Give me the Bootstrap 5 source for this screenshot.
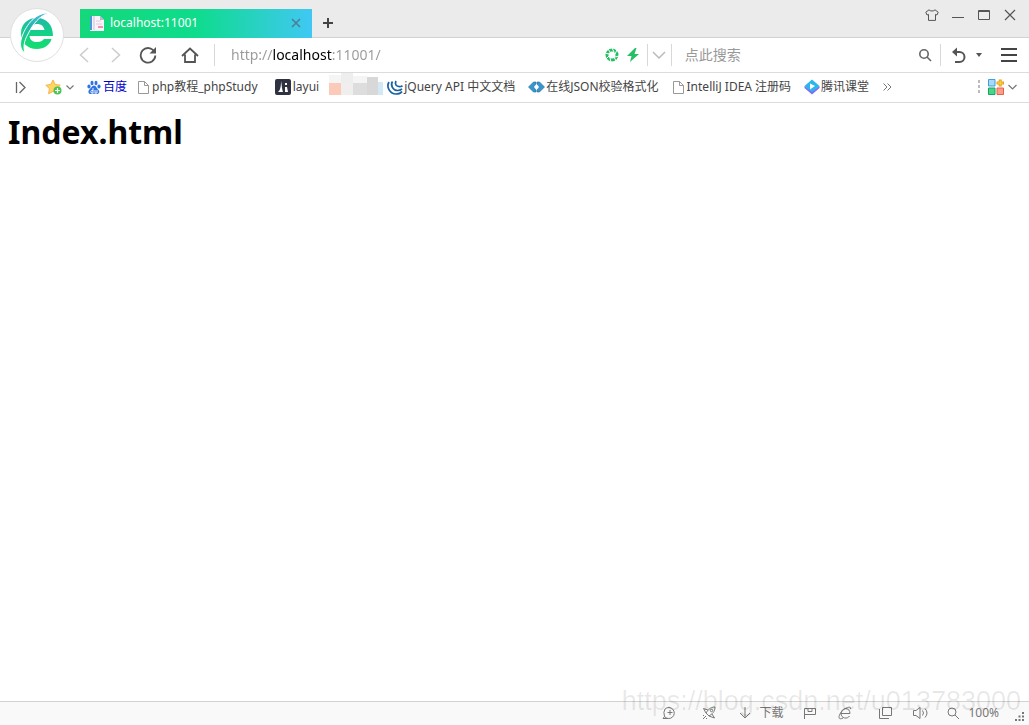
<!DOCTYPE html>
<html lang="zh-CN">
<head>
<meta charset="utf-8">
<meta name="viewport" content="width=device-width, initial-scale=1">
<title>localhost:11001</title>
<link href="https://cdn.jsdelivr.net/npm/bootstrap@5.3.0/dist/css/bootstrap.min.css" rel="stylesheet">
<style>
body{font-family:"Noto Sans","Noto Sans CJK SC",sans-serif;font-size:12px;line-height:16px;color:#444;background:#fff}
svg{display:block;flex:none}
button{border:0;background:none;padding:0;color:#555;display:flex;align-items:center;justify-content:center;flex:none}
.titlebar{height:38px;background:#ebebeb;border-bottom:1px solid #d2d2d2;padding-left:80px;padding-right:11px}
.logo-disc{left:10px;top:7px;width:54px;height:56px;z-index:3}
.tab-active{width:232px;height:29px;margin-top:9px;padding:0 10px 2px 8px;color:#fff;background:linear-gradient(90deg,#14d87a,#0edc8c 50%,#40c8f4)}
.tab-plus{width:32px;height:29px;margin-top:9px;padding-bottom:2px}
.win-tools{height:30px;gap:10px}
.win-tools button{width:16px;height:16px}
.toolbar{height:35px;border-bottom:1px solid #dcdcdc;padding-left:68px;padding-right:12px}
.w32{width:32px}.w52{width:52px}.w20{width:20px}.w23{width:23px}
.rule{width:1px;height:22px;background:#d8d8d8;flex:none}
.rule-home{margin-left:-2px}
.field{border:0;outline:0;background:none;padding:0;min-width:0;font-size:14px;line-height:20px}
.field::placeholder{color:#999;opacity:1}
.address{flex:375 1 0;margin-left:16px;color:transparent;background:linear-gradient(90deg,#999 42px,#000 42px,#000 101px,#999 101px);-webkit-background-clip:text;background-clip:text}
.search{flex:234 1 0;margin-left:13px}
.bookmarks{height:30px;border-bottom:1px solid #dcdcdc;padding:0 12px 1px 12px}
.bookmarks a{color:#444;text-decoration:none;display:flex;align-items:center;gap:1px;white-space:nowrap;margin-right:10px}
.bookmarks a.spaced{margin-right:13px}
.bookmarks .visited-link{color:#00c}
.mosaic{margin-right:4px;margin-bottom:6px}
.page-title{font-size:32px;line-height:42px;font-weight:700;color:#000;margin:0}
.viewport-area{padding:8px}
.statusbar{height:24px;background:#f9f9f9;border-top:1px solid #d2d2d2;padding:0 5px 2px 0}
.statusbar button{color:#777}
.st{width:36px}
.watermark{right:8px;bottom:8px;font-family:"Liberation Sans",sans-serif;font-size:27px;line-height:32px;color:rgba(0,0,0,.09);pointer-events:none}
</style>
</head>
<body class="d-flex flex-column vh-100 overflow-hidden position-relative">
<header>
  <div class="titlebar d-flex align-items-start">
    <div class="logo-disc position-absolute">
      <svg width="54" height="56" viewBox="0 0 54 56">
        <defs><linearGradient id="eg" x1="0" y1="0" x2="0" y2="1"><stop offset="0" stop-color="#22b8a8"/><stop offset=".5" stop-color="#12d286"/><stop offset="1" stop-color="#16dc70"/></linearGradient>
        <linearGradient id="sw" x1="0" y1="1" x2="1" y2="0"><stop offset="0" stop-color="#16dc70"/><stop offset=".5" stop-color="#20b8b0"/><stop offset="1" stop-color="#62b8e8"/></linearGradient></defs>
        <circle cx="27" cy="28" r="26.500" fill="#fff" stroke="#e0e0e0"/>
        <path fill-rule="evenodd" d="M43 29H19.500C20 33 22.500 35 27 35c3.500 0 5.500-1 7-3h7.500C40 38 34 42 27 42c-9.500 0-16-6-16-15.500S17.500 11 27 11s16 6.500 16 18zM19.500 23h15c-.8-4-3.500-6-7.500-6s-6.700 2-7.500 6z" fill="url(#eg)"/>
        <path d="M39 6C28 5 18 15 13 27 9 36 10 43 15 46c-2-6-1-12 3-19C23 17 29 9 39 6z" fill="url(#sw)" stroke="#fff" stroke-width="1"/>
      </svg>
    </div>
    <div class="tab-active d-flex align-items-center">
      <svg width="18" height="18" viewBox="0 0 18 18"><path d="M2 2h10l4 4v11H2z" fill="#f7f4fb"/><path d="M2 2h2v14H2z" fill="#4b98dc"/><path d="M6 2v14" stroke="#c9bfd8"/><path d="M12 2v4h4z" fill="#b9b5cc"/><path d="M8 7h5M8 10h6" stroke="#edc6d4"/><path d="M10 13h5" stroke="#ef92ac" stroke-width="2"/></svg>
      <span class="ms-1 flex-grow-1 ps-0">localhost:11001</span>
      <button type="button" aria-label="关闭标签"><svg width="12" height="12" viewBox="0 0 12 12" stroke="#4d7f94" stroke-width="1.600"><path d="M2 2l8 8M10 2l-8 8"/></svg></button>
    </div>
    <button class="tab-plus" type="button" aria-label="新标签"><svg width="12" height="12" viewBox="0 0 12 12" stroke="#444" stroke-width="2"><path d="M6 1v10M1 6h10"/></svg></button>
    <div class="win-tools d-flex align-items-center ms-auto">
      <button type="button" aria-label="皮肤"><svg width="14" height="12" viewBox="0 0 14 12" fill="none" stroke="#555"><path d="M4 .8L.8 3.200 2 6l1.500-.6v6h7v-6L12 6l1.200-2.800L10 .8C9 2.400 5 2.400 4 .8z"/></svg></button>
      <button type="button" aria-label="最小化"><svg width="12" height="12" viewBox="0 0 12 12" stroke="#555"><path d="M0 8.500h12"/></svg></button>
      <button type="button" aria-label="最大化"><svg width="12" height="10" viewBox="0 0 12 10" fill="none" stroke="#555"><path d="M.5 .5h11v9H.5zM0 1.500h12"/></svg></button>
      <button type="button" aria-label="关闭"><svg width="12" height="12" viewBox="0 0 12 12" stroke="#555" stroke-width="1.200"><path d="M1 1l10 10M11 1L1 11"/></svg></button>
    </div>
  </div>
  <nav class="toolbar d-flex align-items-center">
    <button class="w32" type="button" aria-label="后退"><svg width="10" height="16" viewBox="0 0 10 16" fill="none" stroke="#ccc" stroke-width="1.500"><path d="M9 1L1.500 8 9 15"/></svg></button>
    <button class="w32" type="button" aria-label="前进"><svg width="10" height="16" viewBox="0 0 10 16" fill="none" stroke="#ccc" stroke-width="1.500"><path d="M1 1l7.500 7L1 15"/></svg></button>
    <button class="w32" type="button" aria-label="刷新"><svg width="18" height="18" viewBox="0 0 18 18" fill="none" stroke="#555" stroke-width="1.800"><path d="M15.500 6A7.300 7.300 0 1 0 16.300 9.500"/><path d="M17 1v6.500h-6.500z" fill="#555" stroke="none"/></svg></button>
    <button class="w52" type="button" aria-label="主页"><svg width="18" height="16" viewBox="0 0 18 16" fill="none" stroke="#555" stroke-width="1.800"><path d="M1 9l8-7.500L17 9M4 7.500V15h10V7.500"/></svg></button>
    <span class="rule rule-home"></span>
    <input class="field address" type="text" value="http://localhost:11001/" aria-label="地址">
    <button type="button" aria-label="极速模式"><svg width="14" height="14" viewBox="0 0 14 14" fill="none"><circle cx="7" cy="7" r="5" stroke="#20bf64" stroke-width="3"/><path d="M7 0l2 4M12 2l-2 4M14 8l-4 1M11 13l-2-4M6 14l-1-4M1 11l3-3M0 5l4 1M3 1l2 3" stroke="#fff"/></svg></button>
    <button class="ms-2" type="button" aria-label="加速"><svg width="12" height="14" viewBox="0 0 12 14" fill="#26bf66"><path d="M8 0L0 8h4.500L3 14l9-8H7.500L9.500 0z"/></svg></button>
    <span class="rule ms-2"></span>
    <button class="w23" type="button" aria-label="展开地址"><svg width="14" height="8" viewBox="0 0 14 8" fill="none" stroke="#bbb" stroke-width="1.500"><path d="M1 1l6 6 6-6"/></svg></button>
    <span class="rule"></span>
    <input class="field search" type="search" placeholder="点此搜索" aria-label="搜索">
    <button type="button" aria-label="搜索"><svg width="14" height="14" viewBox="0 0 14 14" fill="none" stroke="#666" stroke-width="1.600"><circle cx="6" cy="6" r="4.200"/><path d="M9 9l4 4"/></svg></button>
    <span class="rule ms-2 me-2"></span>
    <button class="w20" type="button" aria-label="恢复"><svg width="16" height="17" viewBox="0 0 16 17"><path d="M3 5h5.500a5 5 0 0 1 0 10H4" fill="none" stroke="#555" stroke-width="2"/><path d="M1 5l5-4.500v9z" fill="#555"/></svg></button>
    <button class="w20" type="button" aria-label="恢复列表"><svg width="6" height="4" viewBox="0 0 6 4"><path d="M0 0h6L3 4z" fill="#555"/></svg></button>
    <button class="ms-2 ps-1" type="button" aria-label="菜单"><svg width="16" height="14" viewBox="0 0 16 14" stroke="#444" stroke-width="2"><path d="M0 1h16M0 7h16M0 13h16"/></svg></button>
  </nav>
  <nav class="bookmarks d-flex align-items-center">
    <button type="button" aria-label="侧栏" class="me-3"><svg width="16" height="14" viewBox="0 0 16 14" fill="none" stroke="#666" stroke-width="1.300"><path d="M4.500 2v11M7.500 2L13 7.500 7.500 13"/></svg></button>
    <button type="button" aria-label="收藏" class="me-1"><svg width="18" height="16" viewBox="0 0 18 16"><path d="M9 1l2.200 4.500 5 .7-3.600 3.500.8 5L9 12.400l-4.400 2.300.8-5L1.900 6.200l4.900-.7z" fill="#ffd75e" stroke="#f6b24e"/><circle cx="13.500" cy="11.500" r="4" fill="#4cc552"/><path d="M13.500 9v5M11 11.500h5" stroke="#fff" stroke-width="1.200"/></svg></button>
    <button type="button" aria-label="收藏列表" class="me-2 pe-1"><svg width="8" height="5" viewBox="0 0 8 5" fill="none" stroke="#777" stroke-width="1.200"><path d="M.5 .5L4 4 7.500 .5"/></svg></button>
    <a href="#" class="visited-link"><svg width="16" height="16" viewBox="0 0 16 16" fill="#2f74e0"><ellipse cx="3" cy="7.500" rx="1.600" ry="2"/><ellipse cx="6" cy="4" rx="1.500" ry="2.200"/><ellipse cx="10" cy="4" rx="1.500" ry="2.200"/><ellipse cx="13" cy="7.500" rx="1.600" ry="2"/><path d="M8 6.500c2 0 3 3 4.500 4.500 2 2 0 4-1.500 4-1.500 0-4.500-.5-6 0-2 .4-3.500-2-2-4C4 10 6 6.500 8 6.500z"/><path d="M7 9v5H5.500q-1.500-1.200 0-2.500H7M9 11v3h2v-3" fill="none" stroke="#fff" stroke-width=".9"/></svg>百度</a>
    <a href="#" class="spaced"><svg width="14" height="14" viewBox="0 0 14 14" fill="#fff" stroke="#999"><path d="M1.500 1.500h6l4 4v8h-10zM7.500 1.500v4h4"/></svg>php教程_phpStudy</a>
    <a href="#"><svg class="ms-1" width="16" height="16" viewBox="0 0 16 16"><rect width="16" height="16" rx="2" fill="#2f3241"/><path d="M6 2c1 4 .5 6 2 11H3c2-1.500 3-5 3-11z" fill="#fff"/><path d="M10 4h2v2h-2zM10 8h2l1 5h-3z" fill="#fff"/></svg>&#8202;layui</a>
    <svg class="mosaic" width="54" height="23" viewBox="0 0 54 23"><path d="M0 2h12v8H0zM24 3h14v9H24z" fill="#f5f5f5"/><path d="M12 0h12v10H12z" fill="#eee"/><path d="M0 10h12v12H0z" fill="#fbcab8"/><path d="M12 10h12v12H12z" fill="#f1eeee"/><path d="M24 10h14v12H24z" fill="#ddd"/><path d="M38 4h11v18H38z" fill="#d8d8d9"/><path d="M49 9h5v13h-5z" fill="#d3e8f5"/></svg>
    <a href="#" class="spaced"><svg width="16" height="16" viewBox="0 0 16 16" fill="none" stroke="#1c62a0" stroke-width="1.700"><path d="M2 3C-1 8 3 15 9 15c3 0 5-1 6-2.500"/><path d="M5.500 2.500C3 6 6 11.500 10.500 11.500c2 0 3.500-.7 4.500-1.700"/><path d="M9 2c-1.500 3 0 5.500 3.500 5.700 1 0 2-.3 3-1"/></svg>jQuery API 中文文档</a>
    <a href="#" class="spaced"><svg width="17" height="12" viewBox="0 0 17 12"><path d="M5.500 1L.5 6l5 5h2.500V9L5.500 6 8 3V1zM11.500 1l5 5-5 5H9V9l2.500-3L9 3V1z" fill="#3796cf" stroke="#246c9e" stroke-width=".6"/></svg>在线JSON校验格式化</a>
    <a href="#" class="spaced"><svg width="14" height="14" viewBox="0 0 14 14" fill="#fff" stroke="#999"><path d="M1.500 1.500h6l4 4v8h-10zM7.500 1.500v4h4"/></svg>IntelliJ IDEA 注册码</a>
    <a href="#" class="spaced"><svg width="16" height="16" viewBox="0 0 16 16"><path d="M8 .5L15.500 7 8 14 .5 7z" fill="#2cb6ee"/><path d="M.5 7v2L8 15.500 15.500 9V7L8 13z" fill="#7a6ff0"/><path d="M6 4.500v6L11 7z" fill="#fff"/></svg>腾讯课堂</a>
    <button type="button" aria-label="更多书签"><svg width="10" height="8" viewBox="0 0 10 8" fill="none" stroke="#777"><path d="M1.500 .5L5 4 1.500 7.500M5.500 .5L9 4 5.500 7.500"/></svg></button>
    <svg class="ms-auto" width="2" height="14" viewBox="0 0 2 14" fill="#bbb"><path d="M0 0h2v3H0zM0 5h2v3H0zM0 10h2v3H0z"/></svg>
    <button type="button" aria-label="扩展" class="ms-2 me-1"><svg width="16" height="16" viewBox="0 0 16 16"><path d="M.5 .5h6.500v6.500H.5z" fill="#a9d9fa" stroke="#3e9fe0"/><path d="M.5 9h6.500v6.500H.5z" fill="#49d48d" stroke="#14a85a"/><path d="M9 9h6.500v6.500H9z" fill="#ff9d8b" stroke="#e8604c"/><path d="M12.200 .5v7M8.500 4h7.500" stroke="#e3a21b" stroke-width="3"/><path d="M12.200 1.500v5M9.500 4h5.500" stroke="#ffd94a"/></svg></button>
    <button type="button" aria-label="扩展列表"><svg width="9" height="6" viewBox="0 0 9 6" fill="none" stroke="#777" stroke-width="1.200"><path d="M.5 1l4 4 4-4"/></svg></button>
  </nav>
</header>
<main class="viewport-area flex-grow-1">
  <h1 class="page-title">Index.html</h1>
</main>
<footer class="statusbar d-flex align-items-center justify-content-end">
  <button class="st me-1" type="button" aria-label="医生"><svg width="15" height="14" viewBox="0 0 15 14" fill="none" stroke="#777"><path d="M3 3a5.500 5.500 0 1 1-.5 7.500L1 12.500h5M3 3Q1 6 2.500 10.500M8 4v5M5.500 6.500h5"/></svg></button>
  <button class="st" type="button" aria-label="加速器"><svg width="14" height="14" viewBox="0 0 14 14" fill="none" stroke="#777"><path d="M13 1C8 1 6 4 4 7l3 3c3-2 6-4 6-9zM6 4L1.500 2.500 4 7M10 8l2.500 4L7 10M4 10l-3 3M2 9l-1 1M5 12l-1 1"/><circle cx="9.500" cy="4.500" r="1.200"/></svg></button>
  <button class="me-1 ms-2" type="button"><svg class="me-2 ms-1" width="12" height="12" viewBox="0 0 12 12" fill="none" stroke="#777"><path d="M6 0v11M1 6l5 5 5-5"/></svg>下载</button>
  <button class="st ms-1" type="button" aria-label="标记"><svg width="13" height="12" viewBox="0 0 13 12" fill="none" stroke="#777"><path d="M1.500 12V1.500h11v6h-11M5 1.500v3h4v-3"/></svg></button>
  <button class="st" type="button" aria-label="内核"><svg width="14" height="14" viewBox="0 0 14 14" fill="none" stroke="#777"><path d="M3 7.500h9C12 1 3.500 1 3 7.500c0 5 6.500 6 8.500 2.500M12.500 3C14-1 5 2 2 8c-2 4-1 6 3 4"/></svg></button>
  <button class="st ms-1" type="button" aria-label="窗口"><svg width="13" height="12" viewBox="0 0 13 12" fill="none" stroke="#777"><path d="M3.500 .5h9v8h-9zM.5 2v9.500H10"/></svg></button>
  <button class="st" type="button" aria-label="声音"><svg width="16" height="12" viewBox="0 0 16 12" fill="none" stroke="#777"><path d="M.5 3.500H3L7 .5v11L3 8.500H.5zM9.500 3.500q2 2.500 0 5M12 1.500q4 4.500 0 9"/></svg></button>
  <button class="ms-1" type="button"><svg class="me-2 ms-1" width="13" height="12" viewBox="0 0 13 12" fill="none" stroke="#777"><circle cx="5" cy="5" r="4"/><path d="M8 8l4 4"/></svg><span>100%</span></button>
  <svg class="ms-3 mt-2" width="9" height="9" viewBox="0 0 9 9" fill="#777"><path d="M7 0h2v2H7zM3.500 3.500h2v2h-2zM7 3.500h2v2H7zM0 7h2v2H0zM3.500 7h2v2h-2zM7 7h2v2H7z"/></svg>
</footer>
<div class="watermark position-absolute">https://blog.csdn.net/u013783000</div>
<script src="https://cdn.jsdelivr.net/npm/bootstrap@5.3.0/dist/js/bootstrap.bundle.min.js"></script>
</body>
</html>
